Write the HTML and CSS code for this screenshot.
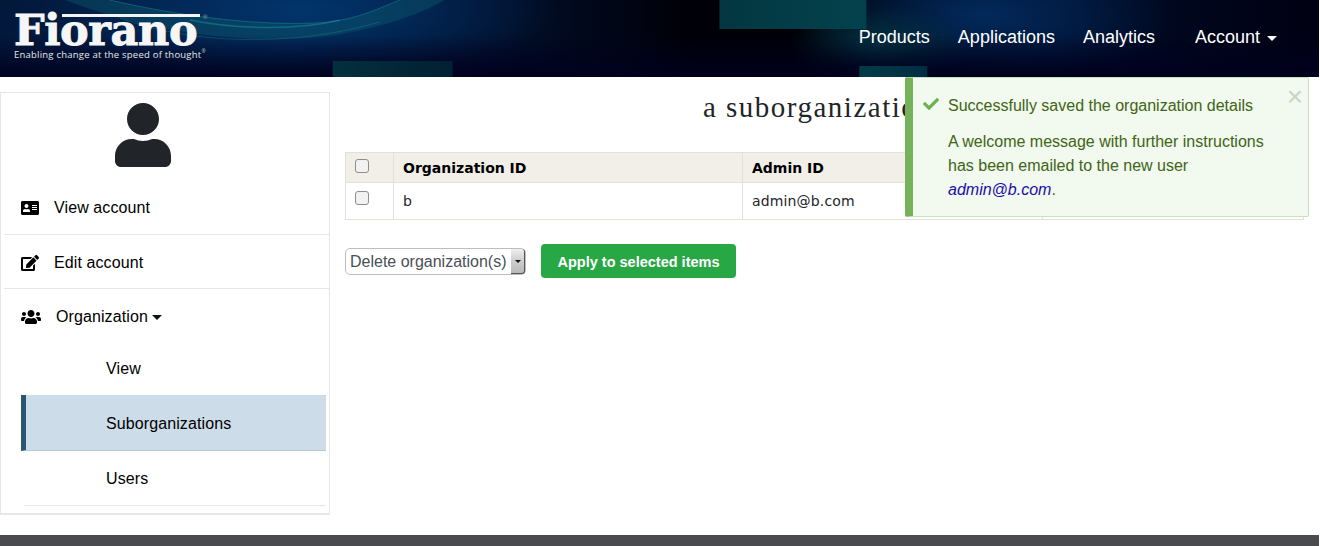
FILE: index.html
```html
<!DOCTYPE html>
<html lang="en">
<head>
<meta charset="utf-8">
<title>Fiorano</title>
<link rel="stylesheet" href="styles.css">
</head>
<body>
<div class="page">
  <header class="topbar">
    <svg class="topbar-art" viewBox="0 0 1320 77" preserveAspectRatio="none" aria-hidden="true">
      <defs>
        <radialGradient id="glowA" cx="0.5" cy="0.5" r="0.5"><stop offset="0" stop-color="#022a5c"/><stop offset="1" stop-color="#022a5c" stop-opacity="0"/></radialGradient>
        <radialGradient id="glowB" cx="0.5" cy="0.5" r="0.5"><stop offset="0" stop-color="#02346b"/><stop offset="1" stop-color="#02346b" stop-opacity="0"/></radialGradient>
        <radialGradient id="glowC" cx="0.5" cy="0.5" r="0.5"><stop offset="0" stop-color="#033442"/><stop offset="1" stop-color="#033442" stop-opacity="0"/></radialGradient>
        <linearGradient id="rectA" x1="0" x2="1" y1="0" y2="0"><stop offset="0" stop-color="#033741"/><stop offset="1" stop-color="#03424d"/></linearGradient>
        <linearGradient id="rectB" x1="0" x2="1" y1="0" y2="0"><stop offset="0" stop-color="#03303c"/><stop offset="1" stop-color="#021f33"/></linearGradient>
        <linearGradient id="rectC" x1="0" x2="1" y1="0" y2="0"><stop offset="0" stop-color="#033c48"/><stop offset="1" stop-color="#022c44"/></linearGradient>
        <linearGradient id="fade" x1="0" x2="0" y1="0" y2="1"><stop offset="0" stop-color="#000020" stop-opacity="0"/><stop offset="1" stop-color="#00001e" stop-opacity="0.95"/></linearGradient>
      </defs>
      <ellipse cx="300" cy="10" rx="260" ry="70" fill="url(#glowB)"/>
      <ellipse cx="985" cy="15" rx="190" ry="70" fill="url(#glowA)"/>
      <ellipse cx="880" cy="45" rx="90" ry="40" fill="url(#glowC)"/>
      <path d="M65 0C130 25 230 48 330 36C380 28 420 15 445 0H400C380 8 360 18 330 22C260 28 170 14 110 0Z" fill="#0f6470" opacity=".36"/>
      <path d="M110 0C170 14 260 28 330 22C360 18 380 8 400 0" fill="none" stroke="#1f9496" stroke-width="1" opacity=".45"/>
      <path d="M190 20C240 30 300 30 340 20" fill="none" stroke="#1f9496" stroke-width="1.5" opacity=".5"/>
      <path d="M120 18C190 44 290 48 380 22" fill="none" stroke="#1c8488" stroke-width="1" opacity=".4"/>
      <rect x="0" y="35" width="1320" height="42" fill="url(#fade)"/>
      <rect x="720" y="0" width="147" height="29" fill="url(#rectA)"/>
      <rect x="333" y="61" width="120" height="16" fill="url(#rectB)"/>
      <rect x="860" y="66" width="68" height="11" fill="url(#rectC)"/>
    </svg>
    <a class="brand" href="#">
      <span class="brand-bar"></span>
      <span class="brand-name">Fiorano<sup class="brand-mark">®</sup></span>
      <span class="brand-tag">Enabling change at the speed of thought<sup class="brand-tag-mark">®</sup></span>
    </a>
    <nav class="mainnav">
      <a href="#">Products</a>
      <a href="#">Applications</a>
      <a href="#">Analytics</a>
      <a class="nav-account" href="#">Account<span class="caret caret-light"></span></a>
    </nav>
  </header>

  <div class="body-row">
    <aside class="sidebar">
      <div class="avatar">
        <svg class="avatar-icon" viewBox="0 0 448 512"><path d="M224 256c70.7 0 128-57.3 128-128S294.7 0 224 0 96 57.3 96 128s57.3 128 128 128zm89.6 32h-16.7c-22.2 10.2-46.9 16-72.9 16s-50.6-5.8-72.9-16h-16.7C60.2 288 0 348.2 0 422.4V464c0 26.5 21.5 48 48 48h352c26.5 0 48-21.5 48-48v-41.6c0-74.2-60.2-134.4-134.4-134.4z"/></svg>
      </div>
      <ul class="side-menu">
        <li class="side-item side-first">
          <svg class="side-icon" viewBox="0 0 576 512"><path d="M528 32H48C21.5 32 0 53.5 0 80v352c0 26.5 21.5 48 48 48h480c26.5 0 48-21.5 48-48V80c0-26.5-21.5-48-48-48zm-352 96c35.3 0 64 28.7 64 64s-28.7 64-64 64-64-28.7-64-64 28.7-64 64-64zm112 236.8c0 10.6-10 19.2-22.4 19.2H86.4C74 384 64 375.4 64 364.8v-19.2c0-31.8 30.1-57.6 67.2-57.6h5c12.3 5.1 25.7 8 39.8 8s27.6-2.9 39.8-8h5c37.1 0 67.2 25.8 67.2 57.6v19.2zM512 312c0 4.4-3.6 8-8 8H360c-4.4 0-8-3.6-8-8v-16c0-4.4 3.6-8 8-8h144c4.4 0 8 3.6 8 8v16zm0-64c0 4.4-3.6 8-8 8H360c-4.4 0-8-3.6-8-8v-16c0-4.4 3.6-8 8-8h144c4.4 0 8 3.6 8 8v16zm0-64c0 4.4-3.6 8-8 8H360c-4.4 0-8-3.6-8-8v-16c0-4.4 3.6-8 8-8h144c4.4 0 8 3.6 8 8v16z"/></svg>
          <a href="#">View account</a>
        </li>
        <li class="side-item side-sep">
          <svg class="side-icon" viewBox="0 0 576 512"><path d="M402.6 83.2l90.2 90.2c3.8 3.8 3.8 10 0 13.8L274.4 405.6l-92.8 10.3c-12.4 1.4-22.9-9.1-21.5-21.5l10.3-92.8L388.8 83.2c3.8-3.8 10-3.8 13.8 0zm162-22.9l-48.8-48.8c-15.2-15.2-39.9-15.2-55.2 0l-35.4 35.4c-3.8 3.8-3.8 10 0 13.8l90.2 90.2c3.8 3.8 10 3.8 13.8 0l35.4-35.4c15.2-15.3 15.2-40 0-55.2zM384 346.2V448H64V128h229.8c3.2 0 6.2-1.3 8.5-3.5l40-40c7.6-7.6 2.2-20.5-8.5-20.5H48C21.5 64 0 85.5 0 112v352c0 26.5 21.5 48 48 48h352c26.5 0 48-21.5 48-48V306.2c0-10.7-12.9-16-20.5-8.5l-40 40c-2.2 2.3-3.5 5.3-3.5 8.5z"/></svg>
          <a href="#">Edit account</a>
        </li>
        <li class="side-item side-group">
          <svg class="side-icon side-icon-wide" viewBox="0 0 640 512"><path d="M96 224c35.3 0 64-28.7 64-64s-28.7-64-64-64-64 28.7-64 64 28.7 64 64 64zm448 0c35.3 0 64-28.7 64-64s-28.7-64-64-64-64 28.7-64 64 28.7 64 64 64zm32 32h-64c-17.6 0-33.5 7.1-45.1 18.6 40.3 22.1 68.9 62 75.1 109.4h66c17.7 0 32-14.3 32-32v-32c0-35.3-28.7-64-64-64zm-256 0c61.9 0 112-50.1 112-112S381.9 32 320 32 208 82.1 208 144s50.1 112 112 112zm76.8 32h-8.3c-20.8 10-43.9 16-68.5 16s-47.6-6-68.5-16h-8.3C179.6 288 128 339.6 128 403.2V432c0 26.5 21.5 48 48 48h288c26.5 0 48-21.5 48-48v-28.8c0-63.6-51.6-115.2-115.2-115.2zm-223.7-13.4C161.5 263.1 145.6 256 128 256H64c-35.3 0-64 28.7-64 64v32c0 17.7 14.3 32 32 32h65.9c6.3-47.4 34.9-87.3 75.2-109.4z"/></svg>
          <a href="#">Organization<span class="caret caret-dark"></span></a>
        </li>
        <li class="sub-item sub-view"><a href="#">View</a></li>
        <li class="sub-item sub-active"><a href="#">Suborganizations</a></li>
        <li class="sub-item sub-last"><a href="#">Users</a></li>
      </ul>
    </aside>

    <main class="content">
      <h1 class="title">a suborganizations</h1>
      <table class="org-table">
        <colgroup>
          <col class="col-check"><col class="col-id"><col class="col-admin"><col>
        </colgroup>
        <thead>
          <tr>
            <th><input class="check" type="checkbox"></th>
            <th>Organization ID</th>
            <th>Admin ID</th>
            <th></th>
          </tr>
        </thead>
        <tbody>
          <tr>
            <td><input class="check" type="checkbox"></td>
            <td>b</td>
            <td>admin@b.com</td>
            <td></td>
          </tr>
        </tbody>
      </table>
      <div class="bulk-actions">
        <div class="select-wrap">
          <select class="bulk-select"><option>Delete organization(s)</option></select>
        </div>
        <button class="apply-btn" type="button">Apply to selected items</button>
      </div>
    </main>
  </div>

  <footer class="footer"></footer>

  <div class="toast" role="alert">
    <button class="toast-close" type="button">×</button>
    <svg class="toast-check" viewBox="0 0 512 512"><path d="M173.898 439.404l-166.4-166.4c-9.997-9.997-9.997-26.206 0-36.204l36.203-36.204c9.997-9.998 26.207-9.998 36.204 0L192 312.69 432.095 72.596c9.997-9.997 26.207-9.997 36.204 0l36.203 36.204c9.997 9.997 9.997 26.206 0 36.204l-294.4 294.401c-9.998 9.997-26.207 9.997-36.204-.001z"/></svg>
    <div class="toast-body">
      <p class="toast-head">Successfully saved the organization details</p>
      <p class="toast-text">A welcome message with further instructions<br>has been emailed to the new user<br><a href="#">admin@b.com</a>.</p>
    </div>
  </div>
</div>
</body>
</html>
```
FILE: styles.css
```css
* { box-sizing: border-box; }
html, body { margin: 0; padding: 0; background: #fff; }
body {
  font-family: "Liberation Sans", Arial, sans-serif;
  font-size: 16px;
  color: #000;
  overflow: hidden;
}
a { color: inherit; text-decoration: none; }
ul { list-style: none; margin: 0; padding: 0; }

.page {
  position: relative;
  width: 1319px;
  height: 546px;
  display: grid;
  grid-template-rows: 77px 1fr 11px;
}

/* header */
.topbar {
  position: relative;
  display: flex;
  align-items: flex-start;
  justify-content: space-between;
  overflow: hidden;
  background: linear-gradient(90deg, #02193c 0, #021f48 22%, #010f2a 38%, #000008 52%, #000006 64%, #00081c 72%, #000d2a 80%, #00051a 92%, #000012 100%);
}
.topbar-art { position: absolute; inset: 0; width: 100%; height: 100%; }
.brand {
  position: relative;
  display: block;
  width: 200px;
  height: 77px;
  margin-left: 14px;
  color: #fff;
}
.brand-bar {
  position: absolute;
  left: 48px;
  top: 14px;
  width: 138px;
  height: 3px;
  background: #f4f4f4;
}
.brand-name {
  display: block;
  padding-top: 10px;
  font-family: "DejaVu Serif", serif;
  font-weight: 700;
  font-size: 43px;
  line-height: 40px;
  height: 50px;
  letter-spacing: -.4px;
  white-space: nowrap;
  color: #f6f6f6;
  -webkit-text-stroke: .9px #f6f6f6;
}
.brand-mark {
  position: absolute;
  left: 189px;
  top: 14px;
  font-family: "Liberation Sans", sans-serif;
  font-weight: 400;
  font-size: 6px;
  line-height: 6px;
  letter-spacing: 0;
  color: #9aa6ad;
  -webkit-text-stroke: 0;
}
.brand-tag {
  display: block;
  font-family: "Open Sans", sans-serif;
  font-size: 9.5px;
  line-height: 10px;
  letter-spacing: .22px;
  white-space: nowrap;
  color: #e8e8e8;
}
.brand-tag-mark { font-size: 5px; line-height: 0; vertical-align: 5px; color: #c0c6ca; }

.mainnav {
  position: relative;
  display: flex;
  gap: 28px;
  padding: 27px 42px 0 0;
  font-size: 18px;
  line-height: 21px;
  color: #fff;
}
.nav-account { margin-left: 12px; }
.caret { display: inline-block; width: 0; height: 0; border-style: solid; border-width: 5px 5px 0; border-color: transparent; }
.caret-light { border-top-color: #fff; margin-left: 7px; vertical-align: 2px; }
.caret-dark { border-top-color: #111; margin-left: 4px; vertical-align: 2px; }

/* layout */
.body-row { display: flex; align-items: flex-start; min-height: 0; }

/* sidebar */
.sidebar {
  flex: none;
  width: 330px;
  height: 423px;
  margin-top: 15px;
  border: 1px solid #e6e6e6;
  border-bottom-width: 2px;
  background: #fff;
}
.avatar { display: flex; justify-content: center; height: 87px; padding: 10px 44px 0 0; }
.avatar-icon { width: 56px; height: 64px; fill: #212529; }
.side-menu { letter-spacing: .1px; }
.side-item {
  display: flex;
  align-items: center;
  height: 54px;
  margin-left: 3px;
  padding-left: 17px;
  padding-top: 2px;
}
.side-first { height: 55px; border-bottom: 1px solid #e6e6e6; }
.side-sep { border-bottom: 1px solid #e6e6e6; }
.side-icon { flex: none; width: 18px; height: 16px; margin-right: 15px; fill: #000; }
.side-icon-wide { width: 20px; margin-right: 15px; }
.side-group { height: 54px; }
.sub-item {
  display: flex;
  align-items: center;
  margin-left: 20px;
  margin-right: 3px;
  padding-left: 85px;
}
.sub-view { height: 52px; padding-bottom: 1px; }
.sub-active {
  height: 56px;
  background: #ccdde9;
  border-left: 5px solid #2c5571;
  border-bottom: 1px solid #b5c8d6;
  padding-left: 80px;
  padding-top: 3px;
}
.sub-last { height: 55px; padding-top: 2px; border-bottom: 1px solid #e6e6e6; margin-left: 23px; padding-left: 82px; }

/* content */
.content { flex: 1; min-width: 0; padding: 0 15px; }
.title {
  margin: 14px 0 29px;
  text-align: center;
  font-family: "Liberation Serif", serif;
  font-weight: 400;
  font-size: 29px;
  line-height: 32px;
  letter-spacing: 1.5px;
  color: #212529;
}
.org-table {
  width: 100%;
  table-layout: fixed;
  border-collapse: collapse;
  font-family: "DejaVu Sans", sans-serif;
  font-size: 14px;
  color: #212529;
  border: 1px solid #e5dfd8;
}
.col-check { width: 48px; }
.col-id { width: 349px; }
.col-admin { width: 300px; }
.org-table th, .org-table td {
  border: 1px solid #e5dfd8;
  padding: 0 9px;
  text-align: left;
  vertical-align: middle;
}
.org-table th { height: 30px; background: #f2eee8; color: #000; font-weight: 700; }
.org-table td { height: 37px; padding-bottom: 1px; letter-spacing: .15px; }
.org-table th:first-child { padding-bottom: 4px; }
.org-table td:first-child { padding-bottom: 7px; }
.check {
  appearance: none;
  display: block;
  width: 14px;
  height: 14px;
  margin: 0;
  border: 1px solid #8d8d8d;
  border-radius: 3px;
  background: #f2f2f2;
}
.bulk-actions { display: flex; align-items: center; gap: 15px; margin-top: 24px; }
.select-wrap { position: relative; width: 181px; height: 27px; }
.select-wrap::before {
  content: "";
  position: absolute;
  right: 1px;
  top: 1px;
  bottom: 1px;
  width: 13px;
  background: linear-gradient(#f0f0f0, #cfcfcf 45%, #b9b9b9);
  border-right: 1px solid #555;
  border-bottom: 1px solid #555;
  border-radius: 0 3px 3px 0;
  pointer-events: none;
}
.select-wrap::after {
  content: "";
  position: absolute;
  right: 5px;
  top: 12px;
  width: 0;
  height: 0;
  border-style: solid;
  border-width: 3px 3px 0;
  border-color: #111 transparent transparent;
  pointer-events: none;
}
.bulk-select {
  appearance: none;
  display: block;
  width: 100%;
  height: 100%;
  padding: 0 0 0 4px;
  border: 1px solid #bdbdbd;
  border-radius: 5px;
  background: #fff;
  font-family: "Liberation Sans", sans-serif;
  font-size: 16px;
  color: #495057;
}
.apply-btn {
  width: 195px;
  height: 34px;
  padding: 1px 0 0;
  border: 0;
  border-radius: 4px;
  background: #28a745;
  color: #fff;
  font-family: "Liberation Sans", sans-serif;
  font-weight: 700;
  font-size: 14.5px;
}

/* footer */
.footer { background: #4a4b4f; }

/* toast */
.toast {
  position: absolute;
  left: 905px;
  top: 77px;
  width: 404px;
  height: 140px;
  display: flex;
  padding: 16px 20px 0 10px;
  background: #f2f9ee;
  border: 1px solid #c9e3b9;
  border-left: 8px solid #74b35a;
  border-radius: 2px;
  color: #3e6516;
}
.toast-check { flex: none; width: 16px; height: 16px; margin: 2px 9px 0 0; fill: #6cb14f; }
.toast-body { min-width: 0; }
.toast-head { margin: 0; line-height: 24px; }
.toast-text { margin: 12px 0 0; line-height: 24px; }
.toast-text a { color: #1a0dab; font-style: italic; }
.toast-close {
  position: absolute;
  right: 3px;
  top: 7px;
  width: 20px;
  height: 24px;
  padding: 0;
  border: 0;
  background: none;
  font-family: "Liberation Sans", sans-serif;
  font-size: 28px;
  line-height: 24px;
  color: #c7d6c2;
}
```
